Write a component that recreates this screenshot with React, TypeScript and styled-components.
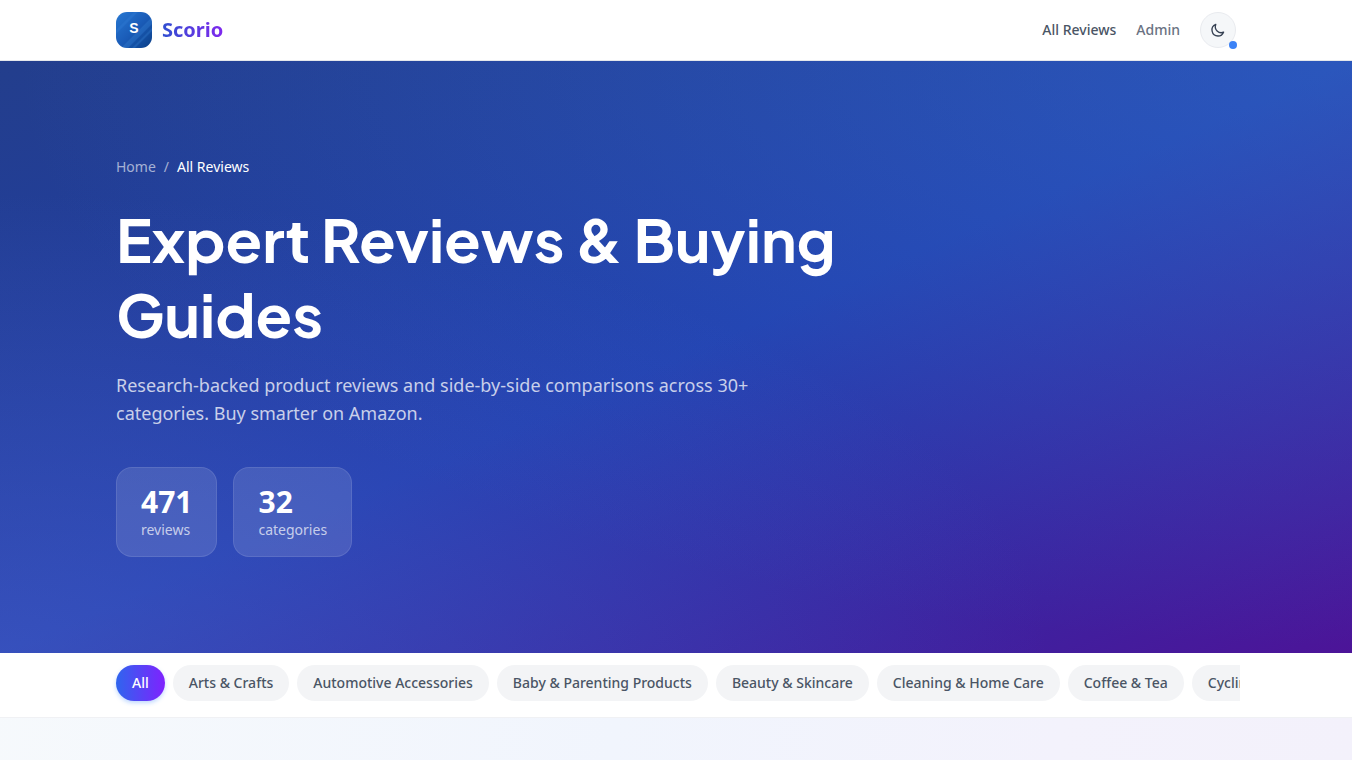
import React, { useState } from 'react';
import styled, { createGlobalStyle, css } from 'styled-components';

const GlobalStyle = createGlobalStyle`
  *, *::before, *::after { box-sizing: border-box; }
  body {
    margin: 0;
    color: #364153;
    background: linear-gradient(100deg, #f7fafc 0%, #f1f5fd 50%, #f3f2fc 80%, #f3f1fb 100%);
    font-family: 'Noto Sans', sans-serif;
    font-size: 14px;
    line-height: 20px;
  }
  #root { min-height: 100vh; }
  h1, p, ol { margin: 0; padding: 0; }
  a { color: inherit; text-decoration: none; }
  button { font: inherit; cursor: pointer; }
`;

const Container = styled.div`
  max-width: 1152px;
  margin: 0 auto;
  padding: 0 16px;
`;

const Header = styled.header`
  background: #fff;
  border-bottom: 1px solid #e5e7eb;
`;

const HeaderRow = styled(Container)`
  display: flex;
  align-items: center;
  justify-content: space-between;
  padding-top: 12px;
  padding-bottom: 12px;
`;

const Brand = styled.a`
  display: flex;
  align-items: center;
  gap: 10px;
`;

const BrandMark = styled.svg`
  display: block;
  width: 36px;
  height: 36px;
`;

const BrandName = styled.span`
  font-size: 20px;
  line-height: 28px;
  font-weight: 700;
  color: transparent;
  background: linear-gradient(90deg, #2f4fd0, #7f28ee);
  background-clip: text;
  -webkit-background-clip: text;
`;

const HeaderNav = styled.nav`
  display: flex;
  align-items: center;
  gap: 20px;
`;

const NavLink = styled.a<{ $muted?: boolean }>`
  font-weight: 500;
  color: ${({ $muted }) => ($muted ? '#6a7282' : '#4a5565')};
`;

const ThemeButton = styled.button`
  position: relative;
  display: flex;
  align-items: center;
  justify-content: center;
  width: 36px;
  height: 36px;
  padding: 0;
  color: #364153;
  background: #f5f7f9;
  border: 1px solid #e9ebef;
  border-radius: 50%;
`;

const ThemeDot = styled.span`
  position: absolute;
  right: -2px;
  bottom: -2px;
  width: 8px;
  height: 8px;
  border-radius: 50%;
  background: #3b82f6;
`;

const Hero = styled.section`
  color: #fff;
  background:
    radial-gradient(ellipse at 100% 0%, rgba(64, 135, 215, 0.35), transparent 70%),
    radial-gradient(ellipse at 0% 100%, rgba(95, 115, 215, 0.36), transparent 55%),
    linear-gradient(to bottom right, #233e8c, #203dae 50%, #4c1498);
`;

const HeroBody = styled(Container)`
  padding-top: 96px;
  padding-bottom: 96px;
`;

const Breadcrumb = styled.ol`
  display: flex;
  gap: 8px;
  margin-bottom: 24px;
  list-style: none;
  color: rgba(255, 255, 255, 0.6);
`;

const Current = styled.li`
  color: #fff;
`;

const Title = styled.h1`
  max-width: 768px;
  margin-bottom: 20px;
  font-family: 'Plus Jakarta Sans', Inter, sans-serif;
  font-size: 60px;
  line-height: 75px;
  font-weight: 700;
`;

const Lead = styled.p`
  max-width: 672px;
  margin-bottom: 40px;
  font-size: 18px;
  line-height: 28px;
  color: rgba(255, 255, 255, 0.75);
`;

const Stats = styled.div`
  display: flex;
  flex-wrap: wrap;
  gap: 16px;
`;

const Stat = styled.div`
  padding: 16px 24px;
  background: rgba(255, 255, 255, 0.12);
  border: 1px solid rgba(255, 255, 255, 0.1);
  border-radius: 16px;
`;

const StatValue = styled.div`
  font-size: 30px;
  line-height: 36px;
  font-weight: 700;
`;

const StatLabel = styled.div`
  color: rgba(255, 255, 255, 0.7);
`;

const FilterBar = styled.div`
  padding: 8px 0;
  background: #fff;
  border-bottom: 1px solid #f0f1f4;
`;

const FilterList = styled.nav`
  display: flex;
  gap: 8px;
  margin: 0 -4px;
  padding: 4px 4px 8px;
  overflow-x: auto;
  scrollbar-width: none;
`;

const Pill = styled.button<{ $active: boolean }>`
  flex: none;
  padding: 8px 16px;
  border: 0;
  border-radius: 18px;
  font-weight: 500;
  white-space: nowrap;
  color: #4a5565;
  background: #f3f4f6;
  ${({ $active }) =>
    $active &&
    css`
      color: #fff;
      background: linear-gradient(to right, #2f65ee, #7f22fe);
      box-shadow: 0 2px 4px rgba(43, 127, 255, 0.3);
    `}
`;

const categories = [
  'All',
  'Arts & Crafts',
  'Automotive Accessories',
  'Baby & Parenting Products',
  'Beauty & Skincare',
  'Cleaning & Home Care',
  'Coffee & Tea',
  'Cycling',
];

const stats = [
  { value: '471', label: 'reviews' },
  { value: '32', label: 'categories' },
];

function Logo() {
  return (
    <BrandMark viewBox="0 0 36 36" aria-hidden="true">
      <defs>
        <linearGradient id="mark" x1="0" y1="0" x2="1" y2="1">
          <stop offset="0" stopColor="#2878d2" />
          <stop offset="0.5" stopColor="#1a5cb8" />
          <stop offset="1" stopColor="#0b3f88" />
        </linearGradient>
        <clipPath id="tile">
          <rect width="36" height="36" rx="11" />
        </clipPath>
      </defs>
      <g clipPath="url(#tile)">
        <rect width="36" height="36" fill="url(#mark)" />
        <path d="M36 5 5 36h7L36 12z" fill="#3f8ee4" opacity="0.28" />
        <path d="M36 16 16 36h3L36 19z" fill="#3f8ee4" opacity="0.25" />
        <path d="M22 0 0 22v-4L18 0z" fill="#3f8ee4" opacity="0.2" />
      </g>
      <text
        x="18"
        y="21"
        textAnchor="middle"
        fill="#fff"
        fontFamily="'Liberation Sans', sans-serif"
        fontSize="14"
        fontWeight="700"
      >
        S
      </text>
    </BrandMark>
  );
}

function Moon() {
  return (
    <svg width="16" height="16" viewBox="0 0 24 24" fill="none" stroke="currentColor" strokeWidth="2" strokeLinecap="round" strokeLinejoin="round" aria-hidden="true">
      <path d="M20.354 15.354A9 9 0 0 1 8.646 3.646 9.003 9.003 0 0 0 12 21a9.003 9.003 0 0 0 8.354-5.646z" />
    </svg>
  );
}

export default function App() {
  const [active, setActive] = useState('All');
  return (
    <>
      <GlobalStyle />
      <Header>
        <HeaderRow>
          <Brand href="#home">
            <Logo />
            <BrandName>Scorio</BrandName>
          </Brand>
          <HeaderNav aria-label="Main">
            <NavLink href="#reviews">All Reviews</NavLink>
            <NavLink href="#admin" $muted>Admin</NavLink>
            <ThemeButton type="button" aria-label="Switch theme">
              <Moon />
              <ThemeDot />
            </ThemeButton>
          </HeaderNav>
        </HeaderRow>
      </Header>
      <main>
        <Hero>
          <HeroBody>
            <nav aria-label="Breadcrumb">
              <Breadcrumb>
                <li><a href="#home">Home</a></li>
                <li aria-hidden="true">/</li>
                <Current aria-current="page">All Reviews</Current>
              </Breadcrumb>
            </nav>
            <Title>Expert Reviews &amp; Buying Guides</Title>
            <Lead>
              Research-backed product reviews and side-by-side comparisons across 30+ categories. Buy smarter on Amazon.
            </Lead>
            <Stats>
              {stats.map(({ value, label }) => (
                <Stat key={label}>
                  <StatValue>{value}</StatValue>
                  <StatLabel>{label}</StatLabel>
                </Stat>
              ))}
            </Stats>
          </HeroBody>
        </Hero>
        <FilterBar>
          <Container>
            <FilterList aria-label="Categories">
              {categories.map((name) => (
                <Pill key={name} type="button" $active={name === active} onClick={() => setActive(name)}>
                  {name}
                </Pill>
              ))}
            </FilterList>
          </Container>
        </FilterBar>
      </main>
    </>
  );
}
